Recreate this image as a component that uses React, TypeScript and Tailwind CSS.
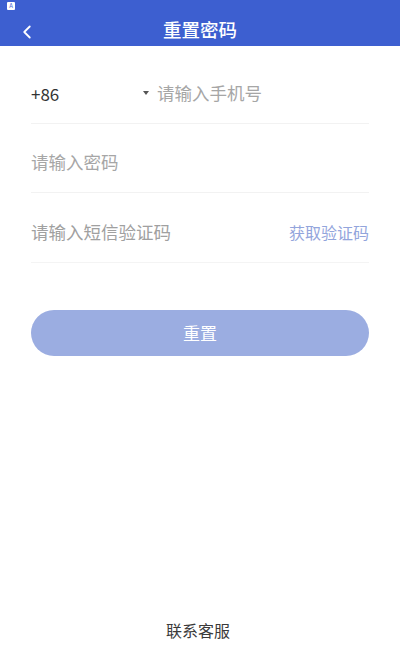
import { ChevronLeft } from 'lucide-react';

const font = { fontFamily: '"Noto Sans CJK SC", "Noto Sans", sans-serif' };

export default function App() {
  return (
    <div className="w-[400px] h-[666px] bg-white flex flex-col" style={font}>
      {/* header */}
      <div className="relative h-[46px] bg-[#3d5fd0] flex items-center justify-center shrink-0">
        <div className="absolute left-[7px] top-[2px] w-[8px] h-[8px] bg-white rounded-[1px] flex items-center justify-center text-[6px] leading-none text-[#3d5fd0]">
          A
        </div>
        <button className="absolute left-[16px] top-[21px] text-white">
          <ChevronLeft size={22} strokeWidth={2} />
        </button>
        <h1 className="text-white text-[18.5px] font-medium mt-[14px]">重置密码</h1>
      </div>

      {/* form */}
      <div className="px-[31px] mt-[24px]">
        <div className="h-[54px] flex items-center border-b border-[#f2f2f2] pb-[6px]">
          <span className="text-[17px] text-[#333] w-[112px]">+86</span>
          <span className="w-0 h-0 border-l-[3px] border-r-[3px] border-t-[4px] border-l-transparent border-r-transparent border-t-[#555] mr-[8px] mb-[2px]" />
          <span className="text-[17.5px] text-[#a6a6a6]">请输入手机号</span>
        </div>
        <div className="h-[69px] flex items-center border-b border-[#f2f2f2] pt-[8px]">
          <span className="text-[17.5px] text-[#a6a6a6]">请输入密码</span>
        </div>
        <div className="h-[70px] flex items-center justify-between border-b border-[#f4f4f4] pt-[9px]">
          <span className="text-[17.5px] text-[#a0a0a0]">请输入短信验证码</span>
          <span className="text-[16px] text-[#93a5dc]">获取验证码</span>
        </div>

        <button className="mt-[47px] w-full h-[46px] rounded-full bg-[#9badE1] text-white text-[17px]">
          重置
        </button>
      </div>

      <div className="flex-1" />
      <div className="h-[48px] flex justify-center">
        <span className="text-[16px] text-[#3a3a3a] ml-[-4px]">联系客服</span>
      </div>
    </div>
  );
}
